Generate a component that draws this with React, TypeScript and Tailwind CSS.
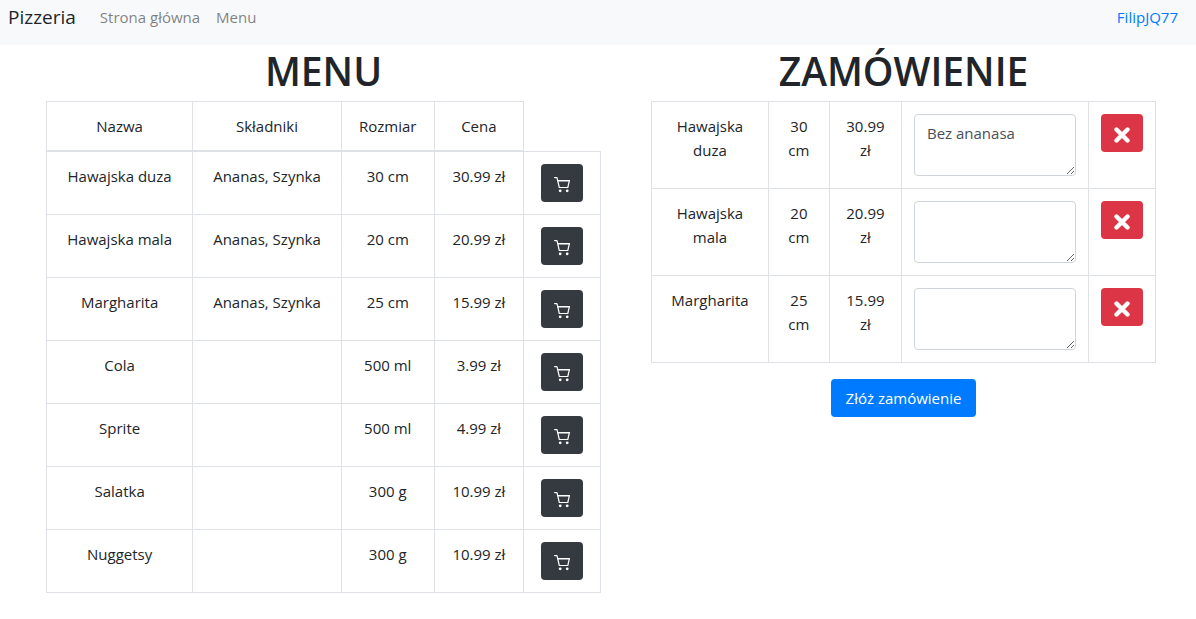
type Item = { name: string; ingredients: string; size: string; price: string };

const menu: Item[] = [
  { name: "Hawajska duza", ingredients: "Ananas, Szynka", size: "30 cm", price: "30.99 zł" },
  { name: "Hawajska mala", ingredients: "Ananas, Szynka", size: "20 cm", price: "20.99 zł" },
  { name: "Margharita", ingredients: "Ananas, Szynka", size: "25 cm", price: "15.99 zł" },
  { name: "Cola", ingredients: "", size: "500 ml", price: "3.99 zł" },
  { name: "Sprite", ingredients: "", size: "500 ml", price: "4.99 zł" },
  { name: "Salatka", ingredients: "", size: "300 g", price: "10.99 zł" },
  { name: "Nuggetsy", ingredients: "", size: "300 g", price: "10.99 zł" },
];

const order = [
  { name: "Hawajska duza", size: "30 cm", price: "30.99 zł", note: "Bez ananasa" },
  { name: "Hawajska mala", size: "20 cm", price: "20.99 zł", note: "" },
  { name: "Margharita", size: "25 cm", price: "15.99 zł", note: "" },
];

const cell = "border border-[#dee2e6] p-3 align-top";
const headCell = "border border-b-2 border-[#dee2e6] p-3 font-normal";
const title = "mb-1.5 pt-0.5 text-center text-[39px] leading-12 font-semibold";
const iconButton = "inline-flex h-[38px] w-[42px] items-center justify-center rounded pt-1 align-top text-white";

function CrossIcon() {
  return (
    <svg viewBox="0 0 16 16" className="size-4" fill="none" stroke="currentColor" strokeWidth="4.4" strokeLinecap="round" aria-hidden="true">
      <path d="M2.5 2.5 13.5 13.5M13.5 2.5 2.5 13.5" />
    </svg>
  );
}

function CartIcon() {
  return (
    <svg viewBox="0 0 16 16" className="size-4" fill="none" stroke="currentColor" strokeWidth="1.2" strokeLinecap="round" strokeLinejoin="round" aria-hidden="true">
      <path d="M.6.6H3L5.3 10.5H13.8L15.3 3.8" />
      <path d="M3.9 3.8H15.3" strokeWidth="1.6" />
      <circle cx="6.2" cy="13.8" r="1.4" fill="currentColor" stroke="none" />
      <circle cx="13.2" cy="13.8" r="1.4" fill="currentColor" stroke="none" />
    </svg>
  );
}

function Navbar() {
  return (
    <nav className="flex h-[45px] items-start bg-[#f8f9fa] px-2 pt-[3px]">
      <a href="#home" className="mr-6 text-[19px] leading-7">Pizzeria</a>
      <div className="flex gap-4 text-[15px] leading-7 text-black/50">
        <a href="#home">Strona główna</a>
        <a href="#menu">Menu</a>
      </div>
      <a href="#profile" className="mr-[10px] ml-auto text-[15px] leading-7 text-[#007bff]">FilipJQ77</a>
    </nav>
  );
}

function MenuTable() {
  return (
    <section>
      <h1 className={title}>MENU</h1>
      <table className="w-full table-fixed border-collapse text-center">
        <colgroup>
          <col className="w-[26.4%]" />
          <col className="w-[26.8%]" />
          <col className="w-[16.8%]" />
          <col className="w-[16.1%]" />
          <col className="w-[13.9%]" />
        </colgroup>
        <thead>
          <tr>
            <th className={headCell}>Nazwa</th>
            <th className={headCell}>Składniki</th>
            <th className={headCell}>Rozmiar</th>
            <th className={headCell}>Cena</th>
          </tr>
        </thead>
        <tbody>
          {menu.map((item) => (
            <tr key={item.name}>
              <td className={cell}>{item.name}</td>
              <td className={cell}>{item.ingredients}</td>
              <td className={cell}>{item.size}</td>
              <td className={cell}>{item.price}</td>
              <td className={cell}>
                <button type="button" aria-label={`Dodaj ${item.name}`} className={`${iconButton} bg-[#343a40]`}>
                  <CartIcon />
                </button>
              </td>
            </tr>
          ))}
        </tbody>
      </table>
    </section>
  );
}

function Order() {
  return (
    <section className="text-center">
      <h1 className={title}>ZAMÓWIENIE</h1>
      <table className="mb-4 w-full table-fixed border-collapse">
        <colgroup>
          <col className="w-[23.2%]" />
          <col className="w-[12.1%]" />
          <col className="w-[14.3%]" />
          <col className="w-[37.1%]" />
          <col className="w-[13.3%]" />
        </colgroup>
        <tbody>
          {order.map((item) => (
            <tr key={item.name}>
              <td className={cell}>{item.name}</td>
              <td className={cell}>{item.size}</td>
              <td className={cell}>{item.price}</td>
              <td className={cell}>
                <textarea
                  rows={2}
                  defaultValue={item.note}
                  aria-label={`Uwagi: ${item.name}`}
                  className="block h-[62px] w-full resize rounded border border-[#ced4da] px-3 py-[6px] text-left text-[#495057]"
                />
              </td>
              <td className={cell}>
                <button type="button" aria-label={`Usuń ${item.name}`} className={`${iconButton} bg-[#dc3545]`}>
                  <CrossIcon />
                </button>
              </td>
            </tr>
          ))}
        </tbody>
      </table>
      <button type="submit" className="rounded bg-[#007bff] px-[15px] py-[7px] text-white">Złóż zamówienie</button>
    </section>
  );
}

export default function App() {
  return (
    <div className="min-h-screen bg-white font-['Open_Sans','Noto_Sans',sans-serif] text-[15px] leading-6 text-[#212529]">
      <Navbar />
      <main className="grid grid-cols-[555fr_505fr] items-start gap-[50px] pr-10 pl-[46px]">
        <MenuTable />
        <Order />
      </main>
    </div>
  );
}
